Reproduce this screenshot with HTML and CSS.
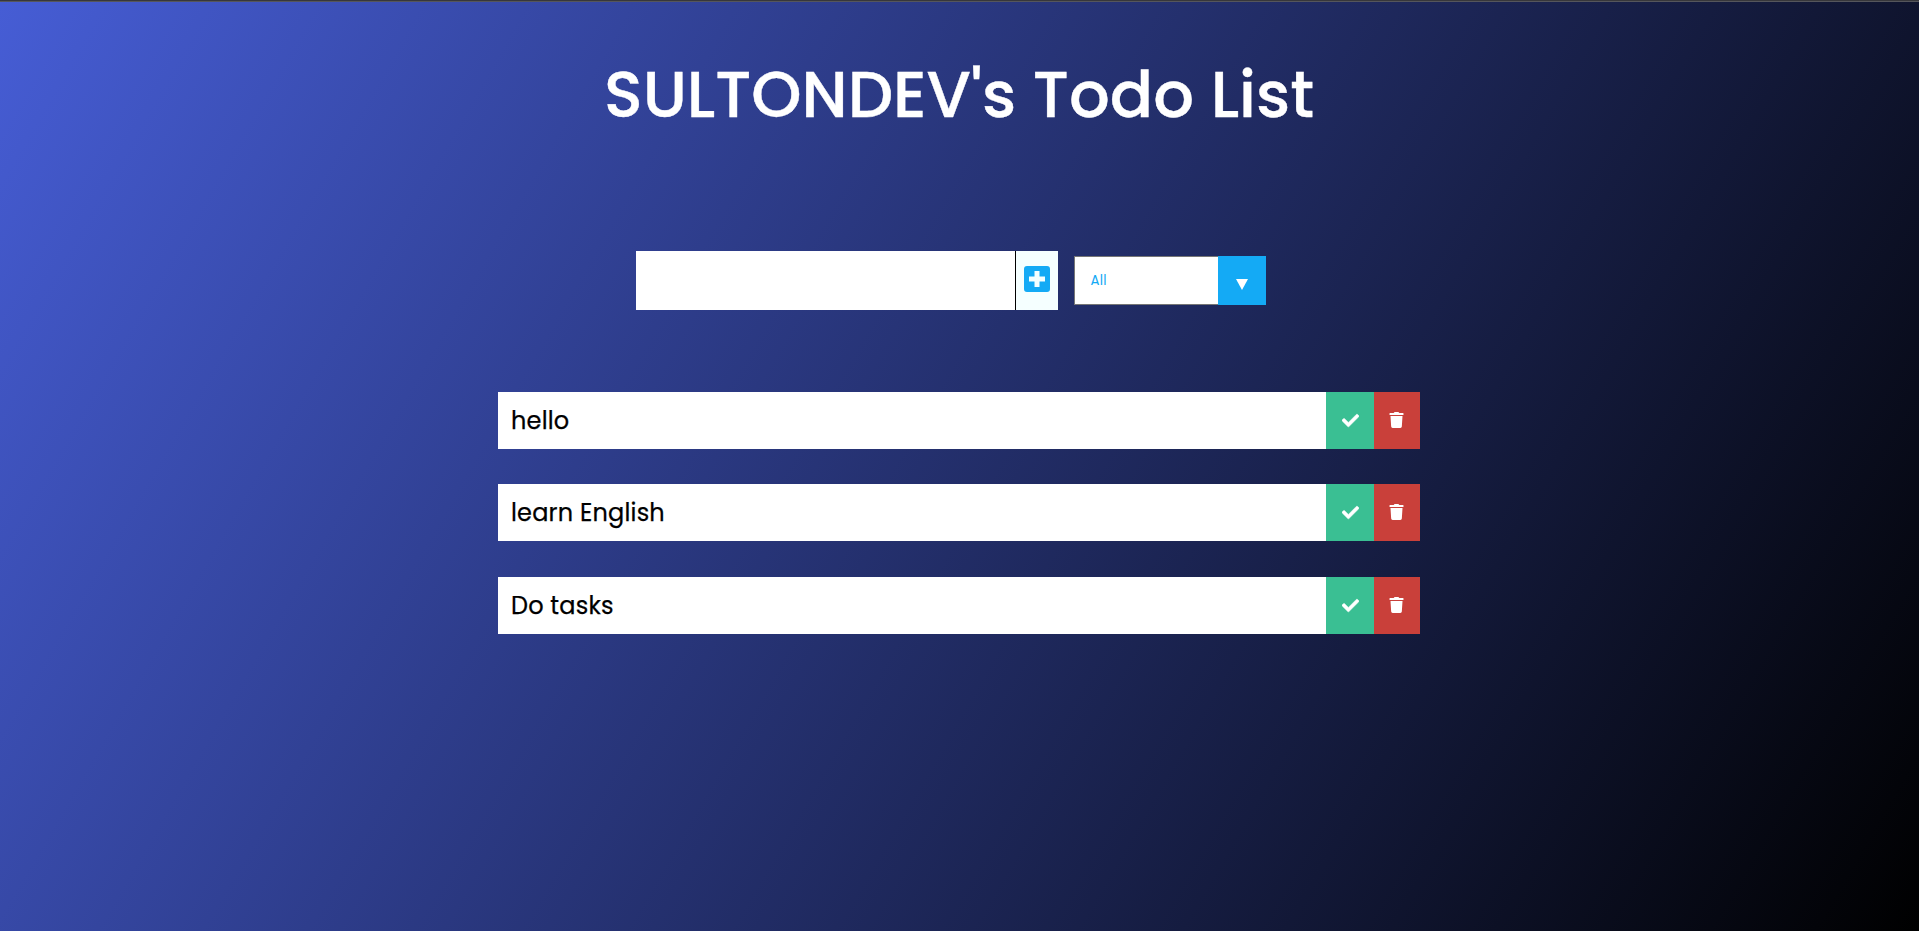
FILE: index.html
```html
<!DOCTYPE html>
<html lang="en">
<head>
<meta charset="utf-8">
<title>Todo List</title>
<link rel="stylesheet" href="styles.css">
</head>
<body>
<svg class="sprite" aria-hidden="true">
  <symbol id="check" viewBox="0 0 512 512"><path d="M173.9 439.4L7.500 273c-10-10-10-26.200 0-36.200l36.200-36.200c10-10 26.200-10 36.200 0L192 312.700 432.100 72.600c10-10 26.200-10 36.200 0l36.200 36.200c10 10 10 26.200 0 36.200L210.100 439.400c-10 10-26.200 10-36.200 0z"/></symbol>
  <symbol id="trash" viewBox="0 0 448 512"><path d="M432 32H312l-9.400-18.700A24 24 0 0 0 281.100 0H166.800a23.700 23.700 0 0 0-21.400 13.300L136 32H16A16 16 0 0 0 0 48v32a16 16 0 0 0 16 16h416a16 16 0 0 0 16-16V48a16 16 0 0 0-16-16zM53.200 467a48 48 0 0 0 47.900 45h245.800a48 48 0 0 0 47.900-45L416 128H32z"/></symbol>
  <symbol id="plus" viewBox="0 0 26 26"><path fill-rule="evenodd" d="M3 0h20a3 3 0 0 1 3 3v20a3 3 0 0 1-3 3H3a3 3 0 0 1-3-3V3a3 3 0 0 1 3-3zM10.500 5v5.500H5v5h5.500V21h5v-5.500H21v-5h-5.500V5z"/></symbol>
</svg>
<div class="page">
  <header class="header"><h1 class="title">SULTONDEV's Todo List</h1></header>
  <form class="form">
    <div class="entry"></div>
    <div class="add"><svg class="plus"><use href="#plus"/></svg></div>
    <div class="select">
      <div class="value">All</div>
      <div class="arrow"><svg class="triangle" viewBox="0 0 12 11"><path d="M0 0h12L6 11z"/></svg></div>
    </div>
  </form>
  <ul class="list">
    <li class="todo"><span class="text">hello</span><span class="done"><svg class="icon-check"><use href="#check"/></svg></span><span class="remove"><svg class="icon-trash"><use href="#trash"/></svg></span></li>
    <li class="todo"><span class="text">learn English</span><span class="done"><svg class="icon-check"><use href="#check"/></svg></span><span class="remove"><svg class="icon-trash"><use href="#trash"/></svg></span></li>
    <li class="todo last"><span class="text">Do tasks</span><span class="done"><svg class="icon-check"><use href="#check"/></svg></span><span class="remove"><svg class="icon-trash"><use href="#trash"/></svg></span></li>
  </ul>
</div>
</body>
</html>
```
FILE: styles.css
```css
* { box-sizing: border-box; margin: 0; padding: 0; }
html { background: #fff; }
body { font-family: Poppins, Inter, sans-serif; overflow: hidden; }
svg { display: block; fill: currentColor; }
.sprite { display: none; }
.page {
  height: 931px;
  border-top: 1px solid #37373b;
  box-shadow: inset 0 1px #55565c;
  background: linear-gradient(120deg, #465dd5, #000) border-box;
}
.header { height: 250px; padding: 46px 1px 0 0; text-align: center; }
.title { font-size: 64px; line-height: 96px; font-weight: 500; color: #fff; white-space: nowrap; -webkit-text-stroke: 0.4px #fff; }
.form { display: flex; height: 59px; margin-left: 636px; }
.entry { width: 379px; background: #fff; }
.add { width: 43px; border-left: 1px solid #000; background: #f5ffff; color: #14aaf5; padding: 15px 0 0 8px; }
.plus { width: 26px; height: 26px; }
.select { display: flex; width: 192px; height: 49px; margin: 5px 0 0 16px; }
.value {
  width: 144px; border: 1px solid #767676; border-right: 0; background: #fff;
  padding-left: 15.500px; font-size: 13.333px; letter-spacing: 0.3px; line-height: 47px; color: #14aaf5;
}
.arrow { width: 48px; background: #14aaf5; color: #fff; padding: 23px 0 0 18px; }
.triangle { width: 12px; height: 11px; }
.list { list-style: none; width: 922px; margin: 82px 0 0 498px; }
.todo { display: flex; height: 57px; margin-bottom: 35px; background: #fff; }
.last { margin-top: 36px; }
.text { flex: 1; padding-left: 13px; font-size: 24px; letter-spacing: 0.2px; line-height: 57px; color: #000; -webkit-text-stroke: 0.25px #000; }
.done, .remove { display: flex; align-items: center; justify-content: center; padding-bottom: 1px; color: #fff; }
.done { width: 48px; background: #3abf93; }
.remove { width: 46px; background: #c9403a; padding-right: 1px; }
.icon-check { width: 17px; height: 17px; stroke: currentColor; stroke-width: 14; }
.icon-trash { width: 15px; height: 16px; }
```
